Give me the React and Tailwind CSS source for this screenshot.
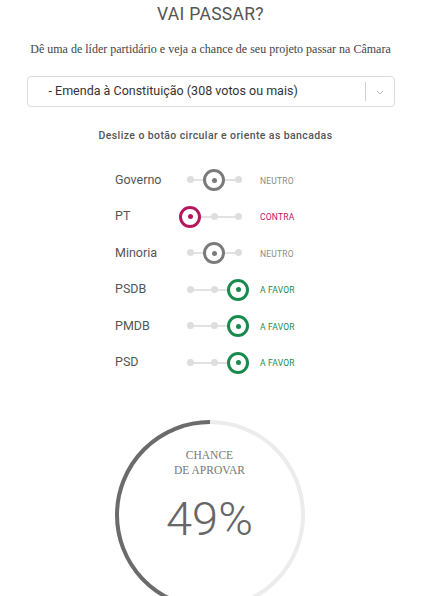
const parties = [
  { name: "Governo", pos: 1, status: "NEUTRO" },
  { name: "PT", pos: 0, status: "CONTRA" },
  { name: "Minoria", pos: 1, status: "NEUTRO" },
  { name: "PSDB", pos: 2, status: "A FAVOR" },
  { name: "PMDB", pos: 2, status: "A FAVOR" },
  { name: "PSD", pos: 2, status: "A FAVOR" },
];

const tones = {
  0: { ring: "border-[#b8155f]", dot: "bg-[#b8155f]", text: "text-[#b8155f]" },
  1: { ring: "border-[#7a7a7a]", dot: "bg-[#7a7a7a]", text: "text-[#8a8a8a]" },
  2: { ring: "border-[#188a4c]", dot: "bg-[#188a4c]", text: "text-[#188a4c]" },
};

function Slider({ pos }) {
  const tone = tones[pos];
  return (
    <div className="relative w-[70px] h-[24px]">
      <div className="absolute left-[11px] right-[11px] top-[11px] h-[2px] bg-[#e2e2e2]" />
      {[0, 1, 2].map((i) =>
        i === pos ? (
          <div
            key={i}
            className={`absolute top-[1px] w-[22px] h-[22px] rounded-full border-[3px] bg-white flex items-center justify-center ${tone.ring}`}
            style={{ left: i * 24 }}
          >
            <div className={`w-[5px] h-[5px] rounded-full ${tone.dot}`} />
          </div>
        ) : (
          <div
            key={i}
            className="absolute top-[8px] w-[7px] h-[7px] rounded-full bg-[#dedede]"
            style={{ left: i * 24 + 8 }}
          />
        )
      )}
    </div>
  );
}

function Gauge({ value }) {
  const r = 93;
  const c = 2 * Math.PI * r;
  return (
    <div className="relative w-[196px] h-[196px]">
      <svg width="196" height="196" viewBox="0 0 196 196" className="absolute inset-0">
        <circle cx="98" cy="98" r={r} fill="none" stroke="#ececec" strokeWidth="4" />
        <circle
          cx="98"
          cy="98"
          r={r}
          fill="none"
          stroke="#6b6b6b"
          strokeWidth="4"
          strokeDasharray={`${(c * value) / 100} ${c}`}
          transform="rotate(-90 98 98) scale(1 -1) translate(0 -196)"
        />
      </svg>
      <div className="absolute inset-0 flex flex-col items-center pt-[31px]">
        <div className="text-[11.5px] leading-[15px] text-[#777] text-center font-['Liberation_Serif',serif]">
          CHANCE
          <br />
          DE APROVAR
        </div>
        <div className="mt-[17px] text-[47px] leading-none text-[#666] font-light font-['Roboto',sans-serif]">
          {value}%
        </div>
      </div>
    </div>
  );
}

export default function App() {
  return (
    <div className="w-[421px] min-h-[596px] bg-white flex flex-col items-center font-['Roboto',sans-serif]">
      <h1 className="mt-[3px] text-[17.5px] leading-[22px] text-[#555] tracking-[0.3px]">VAI PASSAR?</h1>
      <p className="mt-[16px] text-[12px] leading-[16px] text-[#444] font-['Liberation_Serif',serif]">
        Dê uma de líder partidário e veja a chance de seu projeto passar na Câmara
      </p>
      <div className="mt-[19px] w-[368px] h-[31px] border border-[#dcdcdc] rounded-[4px] flex items-center">
        <span className="flex-1 pl-[21px] text-[12.5px] text-[#333]">
          - Emenda à Constituição (308 votos ou mais)
        </span>
        <div className="w-px h-[19px] bg-[#d0d0d0]" />
        <svg width="28" height="20" viewBox="0 0 28 20">
          <path d="M11 9 L14 12 L17 9" fill="none" stroke="#bbb" strokeWidth="1" />
        </svg>
      </div>
      <p className="mt-[22px] ml-[10px] text-[10.5px] leading-[14px] font-medium text-[#555] tracking-[0.4px]">
        Deslize o botão circular e oriente as bancadas
      </p>
      <div className="mt-[19px] self-stretch flex flex-col pl-[115px]">
        {parties.map((p) => (
          <div key={p.name} className="h-[36.5px] flex items-center">
            <span className="w-[64px] text-[12.5px] text-[#555]">{p.name}</span>
            <Slider pos={p.pos} />
            <span className={`ml-[11px] mt-[2px] w-[70px] text-[8.5px] tracking-[0.2px] ${tones[p.pos].text}`}>
              {p.status}
            </span>
          </div>
        ))}
      </div>
      <div className="mt-[36px] mr-[2px]">
        <Gauge value={49} />
      </div>
    </div>
  );
}
